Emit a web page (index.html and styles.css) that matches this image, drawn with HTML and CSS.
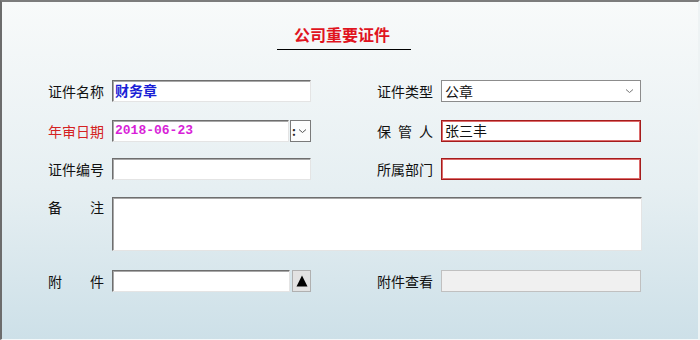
FILE: index.html
```html
<!DOCTYPE html>
<html lang="zh-CN">

<head>
    <meta charset="UTF-8">
    <meta name="viewport" content="width=device-width, initial-scale=1.0">
    <title>公司重要证件</title>
    <link rel="stylesheet" href="styles.css">
</head>

<body>
    <div class="panel">
        <div class="title-wrap">
            <h1 class="title">公司重要证件</h1>
        </div>

        <div class="form">
            <div class="row row1">
                <div class="field">
                    <label class="lbl">证件名称</label>
                    <div class="box sunken val-blue">财务章</div>
                </div>
                <div class="field">
                    <label class="lbl">证件类型</label>
                    <div class="box select">
                        <span>公章</span>
                        <svg class="chev" width="9" height="6" viewBox="0 0 9 6"><path d="M1 1.5 L4.5 4.5 L8 1.5" fill="none" stroke="#777" stroke-width="1"/></svg>
                    </div>
                </div>
            </div>

            <div class="row row2">
                <div class="field">
                    <label class="lbl lbl-red">年审日期</label>
                    <div class="date-group">
                        <div class="box sunken date val-pink">2018-06-23</div>
                        <div class="date-btn">
                            <span class="colon">:</span>
                            <svg width="9" height="6" viewBox="0 0 9 6"><path d="M1 1.5 L4.5 4.5 L8 1.5" fill="none" stroke="#555" stroke-width="1"/></svg>
                        </div>
                    </div>
                </div>
                <div class="field">
                    <label class="lbl">保管人</label>
                    <div class="box redbox">张三丰</div>
                </div>
            </div>

            <div class="row row3">
                <div class="field">
                    <label class="lbl">证件编号</label>
                    <div class="box sunken"></div>
                </div>
                <div class="field">
                    <label class="lbl">所属部门</label>
                    <div class="box redbox"></div>
                </div>
            </div>

            <div class="row row4">
                <label class="lbl lbl-top">备注</label>
                <div class="box sunken memo"></div>
            </div>

            <div class="row row5">
                <div class="field">
                    <label class="lbl">附件</label>
                    <div class="date-group">
                        <div class="box sunken attach"></div>
                        <div class="up-btn">
                            <svg width="12" height="12" viewBox="0 0 12 12"><path d="M6 0.5 L11.5 11.5 L0.5 11.5 Z" fill="#000"/></svg>
                        </div>
                    </div>
                </div>
                <div class="field">
                    <label class="lbl">附件查看</label>
                    <div class="box disabled"></div>
                </div>
            </div>
        </div>
    </div>
</body>

</html>
```

FILE: styles.css
```css
* {
    margin: 0;
    padding: 0;
    box-sizing: border-box;
}

body {
    font-family: "Noto Sans CJK SC", "Liberation Sans", sans-serif;
    font-size: 14px;
    color: #111;
}

.panel {
    width: 700px;
    height: 340px;
    border-top: 2px solid #7c7c7c;
    border-left: 2px solid #6c6c6c;
    border-right: 2px solid #eef3f4;
    border-bottom: 1px solid #f4f8f9;
    background: linear-gradient(#f8fafa, #e6eff2 55%, #cde0e8);
}

.title-wrap {
    padding-top: 22px;
    padding-left: 275px;
}

.title {
    width: 134px;
    font-size: 16px;
    line-height: 20px;
    font-weight: 700;
    color: #e0141e;
    text-align: center;
    padding-bottom: 5px;
    border-bottom: 1px solid #000;
    padding-right: 4px;
}

.form {
    margin-top: 30px;
    padding-left: 46px;
}

.row {
    display: flex;
    gap: 66px;
}

.row2 { margin-top: 18px; }
.row3 { margin-top: 16px; }
.row4 { margin-top: 17px; gap: 8px; }
.row5 { margin-top: 19px; }

.field {
    display: flex;
    align-items: center;
    gap: 8px;
}

.lbl {
    width: 56px;
    line-height: 22px;
    text-align: justify;
    text-align-last: justify;
    color: #111;
    white-space: nowrap;
}

.lbl-red {
    color: #d42222;
}

.lbl-top {
    align-self: flex-start;
    line-height: 20px;
}

.box {
    width: 199px;
    height: 22px;
    background: #fff;
    line-height: 19px;
    padding-left: 2px;
    white-space: nowrap;
}

.sunken {
    border: 1px solid;
    border-color: #6e6e6e #e4e4e4 #e4e4e4 #6e6e6e;
    box-shadow: inset 1px 1px 0 #a8a8a8;
}

.val-blue {
    color: #1b1fd6;
    font-weight: 700;
}

.val-pink {
    color: #d81fd8;
    font-weight: 700;
    font-family: "Liberation Mono", monospace;
    font-size: 13px;
}

.select {
    width: 200px;
    border: 1px solid #8c8c8c;
    display: flex;
    align-items: center;
    justify-content: space-between;
    padding: 0 6px 0 3px;
}

.redbox {
    width: 200px;
    border: 1px solid #a51c1c;
    box-shadow: inset 0 0 0 1px #dc6a6a;
    padding-left: 3px;
}

.date-group {
    display: flex;
    align-items: center;
    gap: 1px;
}

.date {
    width: 177px;
}

.date-btn {
    width: 21px;
    height: 22px;
    border: 1px solid #7a7a7a;
    background: #fdfdfd;
    display: flex;
    align-items: center;
    gap: 2px;
    padding-left: 1px;
}

.colon {
    font-size: 12px;
    line-height: 12px;
    font-weight: 700;
    color: #222;
}

.memo {
    width: 530px;
    height: 54px;
}

.attach {
    width: 178px;
}

.up-btn {
    width: 19px;
    height: 22px;
    margin-left: 1px;
    background: #e2e2e2;
    border: 1px solid #b0b0b0;
    display: flex;
    align-items: center;
    justify-content: center;
}

.disabled {
    width: 200px;
    background: #f0f0f0;
    border: 1px solid #c0c0c0;
}
```
